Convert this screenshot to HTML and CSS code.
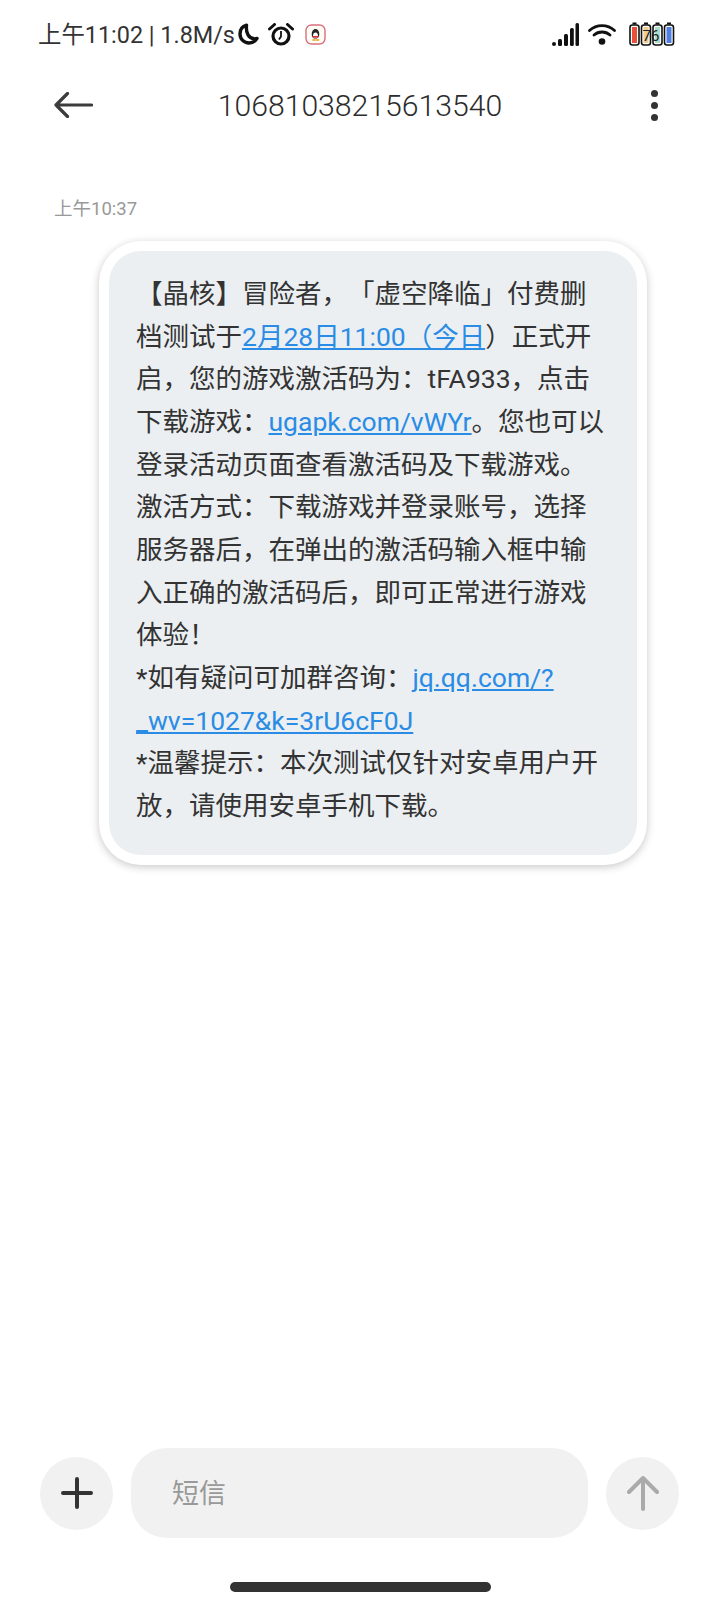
FILE: index.html
```html
<!DOCTYPE html>
<html lang="zh-CN">
<head>
  <meta charset="UTF-8">
  <title>10681038215613540</title>
  <link rel="stylesheet" href="styles.css">
</head>
<body>

<div class="pagina">

  <!-- Status bar -->
  <div class="status">
    <span class="hora">上午11:02 | 1.8M/s</span>
    <svg class="ic-lua" viewBox="0 0 21 22"><path d="M8.5 2.2C4.5 3.3 2 6.8 2 11c0 5 4 9 9 9 3.3 0 6.3-1.8 8-4.6-1 .4-2 .5-3 .4C11 15.400 7.600 10.500 8.500 2.200Z" fill="none" stroke="#111" stroke-width="3.400" stroke-linejoin="round"/></svg>
    <svg class="ic-alarme" viewBox="0 0 26 23"><circle cx="13" cy="13" r="8" fill="none" stroke="#111" stroke-width="3.200"/><path d="M13 8v5.500l-2 3" fill="none" stroke="#111" stroke-width="1.800"/><path d="M1.500 6 6.500 1.500M24.500 6 19.500 1.500" stroke="#111" stroke-width="3" stroke-linecap="round"/></svg>
    <svg class="ic-qq" viewBox="0 0 21 21"><rect x="1" y="1" width="19" height="19" rx="5.500" fill="#fffdf6" stroke="#d9707f" stroke-width="1.400"/><ellipse cx="10.500" cy="10" rx="3.800" ry="5" fill="#222"/><ellipse cx="10.500" cy="11.500" rx="2.400" ry="3" fill="#fff"/><path d="M7 12h7l-1 1.800H8Z" fill="#d8323c"/><ellipse cx="9" cy="16" rx="2" ry="1" fill="#e8b13c"/><ellipse cx="12.500" cy="16" rx="2" ry="1" fill="#e8b13c"/></svg>
    <span class="espaco"></span>
    <svg class="ic-sinal" viewBox="0 0 27 23"><g fill="#111"><rect x="0" y="19" width="4" height="4" rx="2"/><rect x="6" y="16" width="4" height="7" rx="1.500"/><rect x="12" y="11" width="4" height="12" rx="1.500"/><rect x="18" y="5" width="3.800" height="18" rx="1.500"/><rect x="23.500" y="0" width="3.500" height="23" rx="1.500"/></g></svg>
    <svg class="ic-wifi" viewBox="0 0 28 22"><g fill="none" stroke="#111" stroke-width="2.800" stroke-linecap="round"><path d="M1.500 7.500C8.500 1 19.500 1 26.500 7.500"/><path d="M6 12c4.500-4 11.500-4 16 0"/></g><circle cx="14" cy="18.500" r="3.300" fill="#111"/></svg>
    <svg class="ic-bateria" viewBox="0 0 46 24">
      <rect x="1" y="3" width="9" height="20" rx="2.500" fill="#fff" stroke="#111" stroke-width="1.600"/>
      <rect x="3" y="5" width="5" height="16" fill="#e8503a"/>
      <rect x="3.500" y="0.500" width="4" height="2" fill="#111"/>
      <rect x="12.500" y="3" width="9" height="20" rx="2.500" fill="#fff" stroke="#111" stroke-width="1.600"/>
      <rect x="14.500" y="5" width="5" height="16" fill="#efce8d"/>
      <rect x="15" y="0.500" width="4" height="2" fill="#111"/>
      <rect x="24" y="3" width="9" height="20" rx="2.500" fill="#fff" stroke="#111" stroke-width="1.600"/>
      <rect x="26" y="5" width="5" height="16" fill="#a8dccb"/>
      <rect x="26.500" y="0.500" width="4" height="2" fill="#111"/>
      <rect x="35.500" y="3" width="9" height="20" rx="2.500" fill="#fff" stroke="#111" stroke-width="1.600"/>
      <rect x="37.500" y="5" width="5" height="16" fill="#4f7fe0"/>
      <rect x="38" y="0.500" width="4" height="2" fill="#111"/>
      <text x="22" y="19" class="bateria-num">76</text>
    </svg>
  </div>

  <!-- Topo -->
  <div class="topo">
    <svg class="ic-voltar" viewBox="0 0 39 26"><path d="M37.500 13H2M13.500 1.500 2 13l11.500 11.500" fill="none" stroke="#3c3c3c" stroke-width="3.200" stroke-linecap="round" stroke-linejoin="round"/></svg>
    <div class="titulo">10681038215613540</div>
    <div class="pontos"><i></i><i></i><i></i></div>
  </div>

  <div class="hora-msg">上午10:37</div>

  <!-- Mensagem -->
  <div class="balao">
    <div class="balao-dentro">
      【晶核】冒险者，「虚空降临」付费删<br>
      档测试于<a href="#">2月28日11:00（今日</a>）正式开<br>
      启，您的游戏激活码为：tFA933，点击<br>
      下载游戏：<a href="#">ugapk.com/vWYr</a>。您也可以<br>
      登录活动页面查看激活码及下载游戏。<br>
      激活方式：下载游戏并登录账号，选择<br>
      服务器后，在弹出的激活码输入框中输<br>
      入正确的激活码后，即可正常进行游戏<br>
      体验！<br>
      *如有疑问可加群咨询：<a href="#">jq.qq.com/?</a><br>
      <a href="#">_wv=1027&amp;k=3rU6cF0J</a><br>
      *温馨提示：本次测试仅针对安卓用户开<br>
      放，请使用安卓手机下载。
    </div>
  </div>

  <div class="espaco"></div>

  <!-- Campo de texto -->
  <div class="rodape">
    <div class="botao">
      <svg class="ic-mais" viewBox="0 0 32 32"><path d="M16 2v28M2 16h28" stroke="#333" stroke-width="4" stroke-linecap="round"/></svg>
    </div>
    <div class="campo">短信</div>
    <div class="botao">
      <svg class="ic-enviar" viewBox="0 0 32 36"><path d="M16 34V3M2 17 16 3l14 14" fill="none" stroke="#aaa" stroke-width="4" stroke-linecap="round" stroke-linejoin="round"/></svg>
    </div>
  </div>

  <div class="barra-home"></div>
</div>

</body>
</html>
```

FILE: styles.css
```css
* {
  box-sizing: border-box;
}

html, body {
  margin: 0;
  padding: 0;
  background: #fff;
}

body {
  font-family: Roboto, "Noto Sans CJK SC", sans-serif;
  color: #333;
  text-spacing-trim: space-all;
}

.pagina {
  width: 720px;
  height: 1600px;
  display: flex;
  flex-direction: column;
  overflow: hidden;
}

.espaco {
  flex: 1;
}

.status {
  height: 68px;
  padding: 0 45px 0 38px;
  display: flex;
  align-items: center;
}

.hora {
  font-size: 23.400px;
  color: #333;
  white-space: nowrap;
  margin: 0 3px 3px 0;
}

.ic-lua {
  width: 21px;
  height: 22px;
}

.ic-alarme {
  width: 26px;
  height: 23px;
  margin-left: 9px;
}

.ic-qq {
  width: 21px;
  height: 21px;
  margin-left: 11px;
}

.ic-sinal {
  width: 27px;
  height: 23px;
}

.ic-wifi {
  width: 28px;
  height: 22px;
  margin-left: 9px;
}

.ic-bateria {
  width: 46px;
  height: 24px;
  margin-left: 13px;
}

.bateria-num {
  font-size: 15px;
  fill: #222;
  text-anchor: middle;
}

.topo {
  height: 74px;
  padding: 0 62px 0 54px;
  display: flex;
  align-items: center;
  justify-content: space-between;
}

.ic-voltar {
  width: 39px;
  height: 26px;
}

.titulo {
  font-size: 30.200px;
  font-weight: 300;
  color: #2c2c2c;
  margin-right: 24px;
}

.pontos {
  display: flex;
  flex-direction: column;
  gap: 5px;
}

.pontos i {
  display: block;
  width: 7px;
  height: 7px;
  border-radius: 50%;
  background: #333;
}

.hora-msg {
  margin: 53px 0 0 54px;
  font-size: 18.500px;
  line-height: 28px;
  color: #999;
}

.balao {
  width: 548px;
  margin: 18px 0 0 99px;
  padding: 10px;
  background: #fff;
  border-radius: 42px;
  box-shadow: 0 2px 8px rgba(0, 0, 0, 0.22);
}

.balao-dentro {
  padding: 22px 10px 27px 27px;
  background: #ebeff1;
  border-radius: 32px;
  font-size: 26.500px;
  line-height: 42.670px;
  color: #333;
  white-space: nowrap;
}

.balao-dentro a {
  color: #2a8ce5;
}

.rodape {
  padding: 0 41px 0 40px;
  display: flex;
  align-items: center;
  gap: 18px;
}

.botao {
  width: 73px;
  height: 73px;
  border-radius: 50%;
  background: #f1f1f1;
  display: flex;
  align-items: center;
  justify-content: center;
  flex: none;
}

.ic-mais {
  width: 32px;
  height: 32px;
}

.ic-enviar {
  width: 32px;
  height: 36px;
}

.campo {
  flex: 1;
  height: 90px;
  padding-left: 41px;
  background: #f1f1f1;
  border-radius: 36px;
  font-size: 27px;
  line-height: 92px;
  color: #999;
}

.barra-home {
  width: 261px;
  height: 10px;
  margin: 44px 0 8px 230px;
  border-radius: 5px;
  background: #333;
}
```
